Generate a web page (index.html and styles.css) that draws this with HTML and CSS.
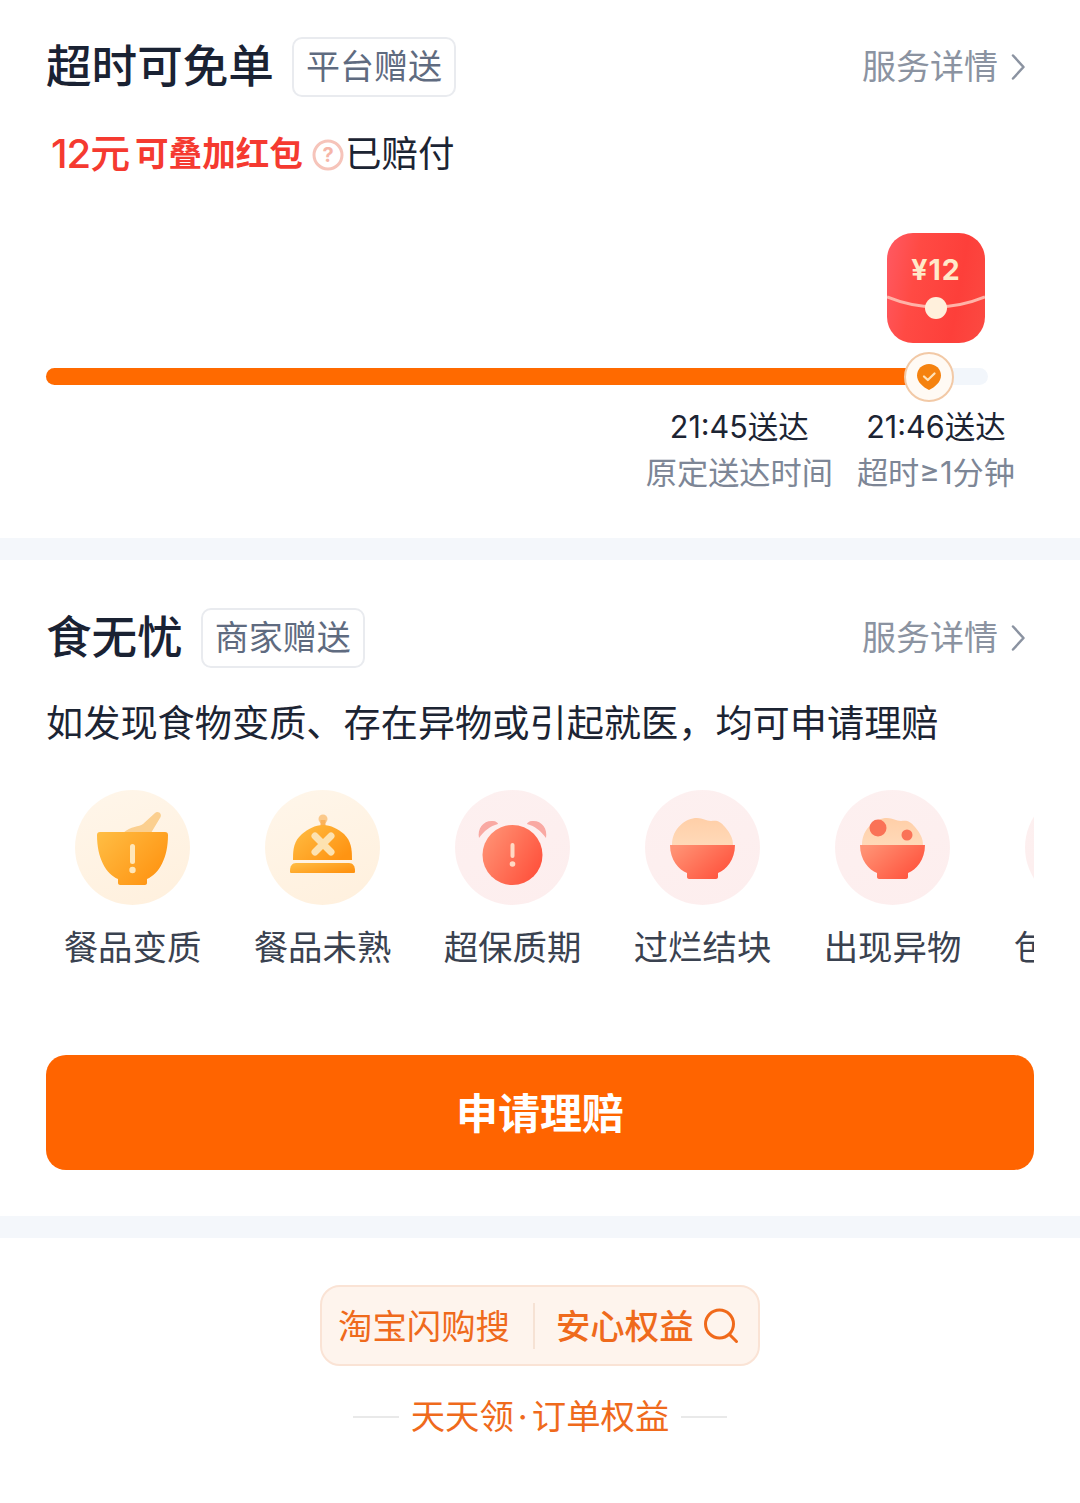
FILE: index.html
```html
<!DOCTYPE html>
<html lang="zh-CN">
<head>
<meta charset="utf-8">
<title>权益</title>
<link rel="stylesheet" href="styles.css">
</head>
<body>
<svg class="defs" width="0" height="0" aria-hidden="true">
  <defs>
    <linearGradient id="amber" x1="0" y1="0" x2="1" y2="0.700"><stop offset="0" stop-color="#ffbe45"/><stop offset="1" stop-color="#ff9412"/></linearGradient>
    <linearGradient id="redorange" x1="0" y1="0.200" x2="1" y2="0.800"><stop offset="0" stop-color="#ff9274"/><stop offset="1" stop-color="#ff4f3a"/></linearGradient>
    <linearGradient id="rice" x1="0" y1="0" x2="0" y2="1"><stop offset="0" stop-color="#ffcfa8"/><stop offset="1" stop-color="#ffd9b8"/></linearGradient>
  </defs>
</svg>
<main class="page">
  <section class="card card-overtime">
    <header class="head">
      <h2 class="title">超时可免单</h2>
      <span class="tag">平台赠送</span>
      <a class="more">服务详情<svg class="chev" width="14" height="26" viewBox="0 0 14 26"><path d="M2 1.500L12.500 13L2 24.500" fill="none" stroke="#8b93a1" stroke-width="2.500" stroke-linecap="round" stroke-linejoin="round"/></svg></a>
    </header>
    <p class="status">
      <span class="amount">12元</span><b class="stack">可叠加红包</b>
      <svg class="help" width="32" height="32" viewBox="0 0 32 32"><circle cx="16" cy="16" r="14" fill="#fff" stroke="#f6c4ba" stroke-width="3"/><text x="16" y="23" text-anchor="middle" class="help-q">?</text></svg>
      <span class="paid">已赔付</span>
    </p>
    <div class="packet-row">
      <div class="packet">
        <span class="packet-text">¥12</span>
        <svg class="flap" width="98" height="50" viewBox="0 0 98 50"><path d="M0 2Q49 22 98 2" fill="none" stroke="#ffb3a8" stroke-width="3"/><circle cx="49" cy="13" r="11" fill="#fff0dc"/></svg>
      </div>
    </div>
    <div class="track">
      <div class="fill"></div>
      <div class="knob">
        <svg width="26" height="28" viewBox="0 0 26 28"><path d="M13 1C19.600 1 25 6 25 12.500C25 19 19 24 13 27C7 24 1 19 1 12.500C1 6 6.400 1 13 1Z" fill="#f5820f"/><path d="M8 13.500L11.800 17L18.500 10.500" fill="none" stroke="#ffe2b8" stroke-width="2.300" stroke-linecap="round" stroke-linejoin="round"/></svg>
      </div>
    </div>
    <div class="times">
      <div class="time"><span class="clock">21:45送达</span><span class="note">原定送达时间</span></div>
      <div class="time"><span class="clock">21:46送达</span><span class="note">超时≥1分钟</span></div>
    </div>
  </section>

  <section class="card card-food">
    <header class="head">
      <h2 class="title">食无忧</h2>
      <span class="tag">商家赠送</span>
      <a class="more">服务详情<svg class="chev" width="14" height="26" viewBox="0 0 14 26"><path d="M2 1.500L12.500 13L2 24.500" fill="none" stroke="#8b93a1" stroke-width="2.500" stroke-linecap="round" stroke-linejoin="round"/></svg></a>
    </header>
    <p class="desc">如发现食物变质、存在异物或引起就医，均可申请理赔</p>
    <div class="issues">
      <div class="issue">
        <svg class="issue-icon warm" width="115" height="115" viewBox="0 0 115 115">
          <path d="M48 43C56 36 64 37 68 34L80 23C83 20 88 24 85 28L76 43Z" fill="#fbcf8f"/>
          <path d="M22 45C22 43 23 42 25 42H90C92 42 93 43 93 45C93 68 84 84 72 89V93C72 94 71 95 70 95H45C44 95 43 94 43 93V89C31 84 22 68 22 45Z" fill="url(#amber)"/>
          <rect x="55" y="54" width="5" height="20" rx="2.500" fill="#ffe6b8"/><circle cx="57.500" cy="80" r="3.200" fill="#ffe6b8"/>
        </svg>
        <span class="issue-name">餐品变质</span>
      </div>
      <div class="issue">
        <svg class="issue-icon warm" width="115" height="115" viewBox="0 0 115 115">
          <circle cx="58" cy="29" r="4.500" fill="#fbc98b"/>
          <path d="M55.500 30H60.500V37H55.500Z" fill="#fbb25a"/>
          <path d="M28 70C28 58 29 51 37 44C43 39 50 35 58 35C66 35 73 39 79 44C86 51 87 58 87 70Z" fill="url(#amber)"/>
          <path d="M25 81C25 76 27 73 31 73H84C88 73 90 76 90 81C90 82 90 83 89 83H26C25 83 25 82 25 81Z" fill="url(#amber)"/>
          <path d="M50 46L66 62M66 46L50 62" stroke="#fde2b0" stroke-width="7" stroke-linecap="round"/>
        </svg>
        <span class="issue-name">餐品未熟</span>
      </div>
      <div class="issue">
        <svg class="issue-icon rosy" width="115" height="115" viewBox="0 0 115 115">
          <path d="M24 48C22 38 29 30 38 31C41 31 43 33 43 34C35 36 29 41 24 48Z" fill="#f9a9a3"/>
          <path d="M91 48C93 38 86 30 77 31C74 31 72 33 72 34C80 36 86 41 91 48Z" fill="#f9a9a3"/>
          <circle cx="57.500" cy="65" r="30" fill="url(#redorange)"/>
          <rect x="55.500" y="53" width="4" height="15" rx="2" fill="#ffd9c4"/><circle cx="57.500" cy="74" r="2.800" fill="#ffd9c4"/>
        </svg>
        <span class="issue-name">超保质期</span>
      </div>
      <div class="issue">
        <svg class="issue-icon rosy" width="115" height="115" viewBox="0 0 115 115">
          <path d="M27 55C27 38 41 28 52 28C58 28 61 31 66 31C72 30 75 31 80 37C85 43 88 48 88 55Z" fill="url(#rice)"/>
          <path d="M25 55H90C90 70 81 80 73 83V87C73 88 72 89 71 89H44C43 89 42 88 42 87V83C34 80 25 70 25 55Z" fill="url(#redorange)"/>
        </svg>
        <span class="issue-name">过烂结块</span>
      </div>
      <div class="issue">
        <svg class="issue-icon rosy" width="115" height="115" viewBox="0 0 115 115">
          <path d="M27 55C27 38 41 28 52 28C58 28 61 31 66 31C72 30 75 31 80 37C85 43 88 48 88 55Z" fill="url(#rice)"/>
          <path d="M25 55H90C90 70 81 80 73 83V87C73 88 72 89 71 89H44C43 89 42 88 42 87V83C34 80 25 70 25 55Z" fill="url(#redorange)"/>
          <circle cx="43" cy="38" r="8.500" fill="#fa7257"/><circle cx="72" cy="45" r="5.500" fill="#fa7257"/>
        </svg>
        <span class="issue-name">出现异物</span>
      </div>
      <div class="issue">
        <svg class="issue-icon rosy" width="115" height="115" viewBox="0 0 115 115"></svg>
        <span class="issue-name">包装破损</span>
      </div>
    </div>
    <button class="claim" type="button">申请理赔</button>
  </section>

  <section class="card card-foot">
    <div class="search">
      <span class="search-term">淘宝闪购搜</span>
      <i class="search-sep"></i>
      <strong class="search-key">安心权益</strong>
      <svg class="search-icon" width="36" height="36" viewBox="0 0 36 36"><circle cx="16.500" cy="16" r="14" fill="none" stroke="#f0691a" stroke-width="3"/><path d="M27 27L33.500 33.500" stroke="#f0691a" stroke-width="3" stroke-linecap="round"/></svg>
    </div>
    <div class="daily"><i class="rule"></i><span class="daily-text">天天领<span class="daily-dot">·</span>订单权益</span><i class="rule"></i></div>
  </section>
</main>
</body>
</html>
```
FILE: styles.css
```css
* { box-sizing: border-box; }
html, body { margin: 0; padding: 0; background: #fff; }
body { font-family: Inter, "Noto Sans CJK SC", "Noto Sans", sans-serif; color: #1c2433; width: 1080px; height: 1503px; overflow: hidden; }
.defs { display: block; height: 0; }
.page { display: flex; flex-direction: column; gap: 22px; background: #f4f7fb; height: 1503px; }
.card { background: #fff; padding: 0 46px; }
.card-overtime { height: 538px; padding-top: 37px; }
.card-food { height: 656px; padding-top: 48px; }
.card-foot { flex: 1; padding-top: 47px; display: flex; flex-direction: column; align-items: center; }

.head { display: flex; align-items: center; height: 60px; }
.title { margin: 0; font-size: 45.600px; line-height: 60px; font-weight: 500; color: #1a2233; }
.tag { margin-left: 18px; height: 60px; padding: 0 12px; border: 2px solid #e9ebef; border-radius: 10px; font-size: 34px; line-height: 56px; color: #5f6b80; }
.more { margin-left: auto; margin-right: 9px; display: flex; align-items: center; gap: 13px; font-size: 34px; line-height: 60px; color: #8b93a1; }

.status { margin: 24px 0 0 5px; height: 60px; display: flex; align-items: center; }
.amount { font-size: 40px; font-weight: 500; color: #f53a30; width: 84px; white-space: nowrap; letter-spacing: -1px; }
.stack { font-size: 33.600px; font-weight: 700; color: #f53a30; white-space: nowrap; }
.help { margin: 8px 1px 0 9px; flex: none; }
.help-q { font-size: 20px; font-weight: 700; fill: #f6b6a9; font-family: Inter, sans-serif; }
.paid { font-size: 36.500px; white-space: nowrap; color: #1c2433; }

.packet-row { display: flex; justify-content: flex-end; padding-right: 49px; margin-top: 52px; height: 110px; }
.packet { position: relative; width: 98px; height: 110px; border-radius: 26px; background: linear-gradient(100deg, #ff5a63 0%, #ff4a44 30%, #fd3f3a 70%, #fb4a42 100%); text-align: center; overflow: hidden; }
.packet-text { display: block; margin-top: 18px; font-size: 28.500px; line-height: 38px; font-weight: 700; letter-spacing: 1px; color: #ffe9c9; }
.flap { position: absolute; left: 0; top: 62px; }

.track { position: relative; margin-top: 25px; width: 942px; height: 17px; border-radius: 9px; background: #f2f6fb; }
.fill { width: 870px; height: 17px; border-radius: 9px; background: #ff6a00; }
.knob { position: absolute; left: 858px; top: -16px; width: 50px; height: 50px; border-radius: 50%; background: #fffaf4; border: 2px solid #f2c9a6; display: flex; align-items: center; justify-content: center; }

.times { display: flex; justify-content: flex-end; gap: 24px; margin-top: 19px; padding-right: 19px; }
.time { display: flex; flex-direction: column; align-items: center; white-space: nowrap; }
.clock { font-size: 30.500px; line-height: 46px; color: #1c2433; }
.note { font-size: 31.200px; line-height: 46px; color: #7d8696; }

.desc { margin: 27px 0 0; font-size: 37.200px; line-height: 58px; white-space: nowrap; color: #1c2433; }
.issues { display: flex; gap: 53px; margin-top: 37px; padding-left: 18px; overflow: hidden; width: 988px; }
.issue { flex: none; width: 137px; display: flex; flex-direction: column; align-items: center; }
.issue-icon { display: block; border-radius: 50%; }
.warm { background: linear-gradient(160deg, #fff6ea, #fff0dd); }
.rosy { background: linear-gradient(160deg, #fdf0f0, #fdeeee); }
.issue-name { margin-top: 18px; font-size: 34.400px; line-height: 50px; white-space: nowrap; color: #3a4250; }

.claim { display: block; width: 988px; height: 115px; margin-top: 82px; padding: 0 0 5px; border: 0; border-radius: 20px; background: #ff6400; color: #fff; font-family: inherit; font-size: 42px; font-weight: 700; }

.search { display: flex; align-items: center; width: 440px; height: 81px; padding: 0 0 4px 16px; border: 2px solid #fae3d5; border-radius: 20px; background: #fef4ed; color: #ef6a1c; }
.search-term { font-size: 34.400px; white-space: nowrap; }
.search-sep { width: 2px; height: 46px; margin: 4px 21px 0 23px; background: #f6e2d4; }
.search-key { font-size: 34.400px; font-weight: 500; white-space: nowrap; }
.search-icon { margin-left: 9px; margin-top: 4px; flex: none; }
.daily { display: flex; align-items: center; gap: 12px; margin-top: 27px; height: 48px; }
.rule { width: 46px; height: 2px; background: #e9e9e9; }
.daily-text { font-size: 34.400px; line-height: 48px; color: #ef6a1c; white-space: nowrap; }
.daily-dot { margin: 0 4px; }
```
